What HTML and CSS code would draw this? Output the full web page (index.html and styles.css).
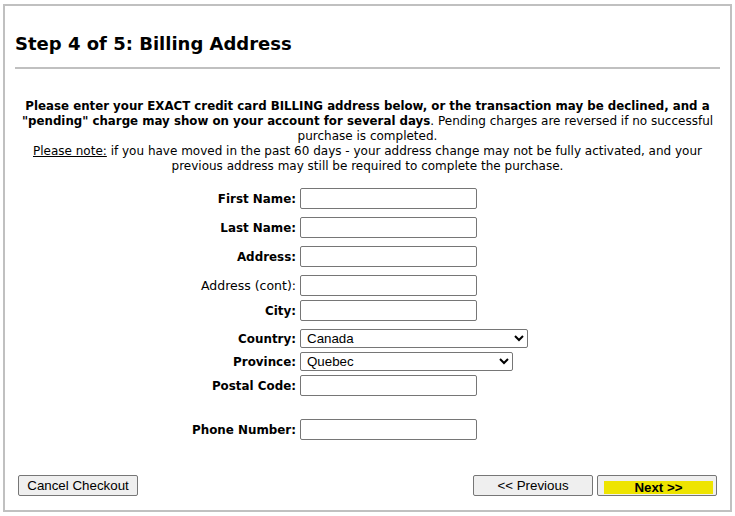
FILE: index.html
```html
<!DOCTYPE html>
<html lang="en">
<head>
  <meta charset="UTF-8" />
  <title>Checkout - Billing Address</title>
  <link rel="stylesheet" href="styles.css">
</head>
<body>

  <div class="checkout">
    <h2>Step 4 of 5: Billing Address</h2>
    <hr />

    <p class="notice">
      <b>Please enter your EXACT credit card BILLING address below, or the transaction may be declined, and a "pending" charge may show on your account for several days</b>. Pending charges are reversed if no successful purchase is completed.<br>
      <u>Please note:</u> if you have moved in the past 60 days - your address change may not be fully activated, and your previous address may still be required to complete the purchase.
    </p>

    <form class="billing" onsubmit="return false;">
      <div class="row">
        <label class="req" for="first">First Name:</label>
        <input type="text" id="first" />
      </div>
      <div class="row">
        <label class="req" for="last">Last Name:</label>
        <input type="text" id="last" />
      </div>
      <div class="row">
        <label class="req" for="addr1">Address:</label>
        <input type="text" id="addr1" />
      </div>
      <div class="row">
        <label for="addr2">Address (cont):</label>
        <input type="text" id="addr2" />
      </div>
      <div class="row tight">
        <label class="req" for="city">City:</label>
        <input type="text" id="city" />
      </div>
      <div class="row select-row">
        <label class="req" for="country">Country:</label>
        <select id="country" class="country">
          <option>Canada</option>
          <option>United States</option>
        </select>
      </div>
      <div class="row select-row close">
        <label class="req" for="province">Province:</label>
        <select id="province" class="province">
          <option>Quebec</option>
          <option>Ontario</option>
        </select>
      </div>
      <div class="row postal">
        <label class="req" for="postal">Postal Code:</label>
        <input type="text" id="postal" />
      </div>
      <div class="row spaced">
        <label class="req" for="phone">Phone Number:</label>
        <input type="text" id="phone" />
      </div>

      <div class="actions">
        <button type="button">Cancel Checkout</button>
        <div class="nav">
          <button type="button">&lt;&lt; Previous</button>
          <button type="submit" class="next"><span>Next &gt;&gt;</span></button>
        </div>
      </div>
    </form>
  </div>

</body>
</html>
```

FILE: styles.css
```css
body {
  margin: 4px 3px;
  font-family: "DejaVu Sans", Verdana, sans-serif;
  font-size: 13px;
  color: #000;
  background: #fff;
}

.checkout {
  width: 705px;
  height: 504px;
  border: 2px solid #c0c0c0;
  padding: 0 10px;
}

h2 {
  font-size: 18px;
  line-height: 21px;
  margin: 27px 0 0 0;
}

hr {
  border: none;
  border-top: 2px solid #c0c0c0;
  margin: 13px 0 0 0;
}

.notice {
  margin: 30px 0 0 0;
  text-align: center;
  line-height: 15px;
  font-size: 12px;
}

.notice b {
  font-size: 11.8px;
}

.billing {
  margin-top: 14px;
}

.row {
  display: grid;
  grid-template-columns: 281px auto;
  column-gap: 4px;
  align-items: center;
  margin-bottom: 8px;
}

.row.tight {
  margin-top: -4px;
}

.row.select-row {
  margin-top: 2px;
}

.row.close {
  margin-top: -4px;
}

.row.postal {
  margin-top: -4px;
}

.row.spaced {
  margin-top: 23px;
}

.row label {
  text-align: right;
  font-size: 12.5px;
}

.row label.req {
  font-weight: bold;
  font-size: 11.9px;
}

.row input[type="text"] {
  box-sizing: border-box;
  width: 177px;
  height: 21px;
  margin: 0;
  border: 1px solid #767676;
  border-radius: 2px;
  padding: 1px 2px;
  font-family: "Liberation Sans", Arial, sans-serif;
  font-size: 13.33px;
}

select {
  box-sizing: border-box;
  height: 19px;
  margin: 0;
  border: 1px solid #767676;
  border-radius: 2px;
  padding: 0 2px;
  font-family: "Liberation Sans", Arial, sans-serif;
  font-size: 13.33px;
  background: #fff;
  color: #000;
}

select.country {
  width: 228px;
}

select.province {
  width: 213px;
}

.actions {
  display: flex;
  justify-content: space-between;
  margin-top: 35px;
  padding: 0 3px;
}

.nav {
  display: flex;
  gap: 4px;
}

button {
  box-sizing: border-box;
  width: 120px;
  height: 21px;
  margin: 0;
  padding: 0 5px;
  border: 1px solid #767676;
  border-radius: 2px;
  background-color: #efefef;
  font-family: "Liberation Sans", Arial, sans-serif;
  font-size: 13.33px;
  color: #000;
}

button.next {
  padding: 0 3px 0 6px;
}

button.next span {
  display: block;
  background-color: #eee400;
  font-weight: bold;
  line-height: 13px;
  margin-top: 4px;
}
```
